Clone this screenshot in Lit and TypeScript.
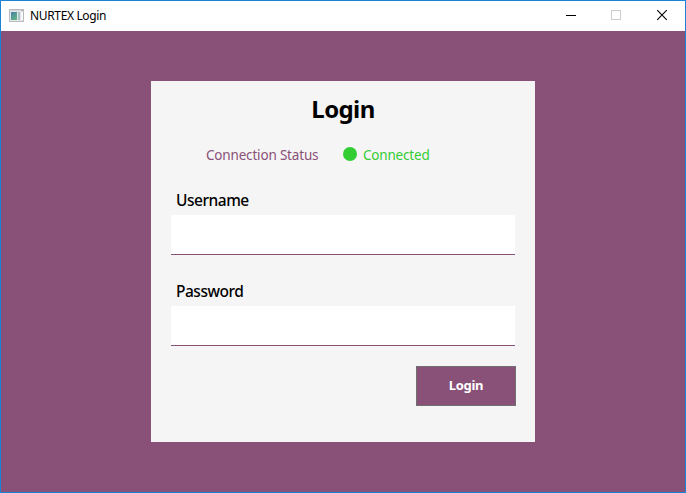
import { LitElement, html, css } from "lit";
import { customElement, property } from "lit/decorators.js";

@customElement("title-bar")
class TitleBar extends LitElement {
  static styles = css`
    :host { display: flex; height: 30px; background: #fff; align-items: center; }
    .app { width: 16px; height: 13px; margin: 0 5px 1px 8px; }
    .name { flex: 1; font-size: 12px; line-height: 16px; letter-spacing: -0.35px; white-space: nowrap; }
    .control { width: 46px; height: 30px; display: flex; }
    svg { display: block; }
  `;
  render() {
    return html`
      <svg class="app" viewBox="0 0 16 13">
        <defs>
          <linearGradient id="pane" x1="0" y1="0" x2="0.6" y2="1">
            <stop offset="0" stop-color="#4a7fa8" />
            <stop offset="1" stop-color="#5cb386" />
          </linearGradient>
        </defs>
        <rect x="0.5" y="0.5" width="14" height="12" fill="#e4e6e9" stroke="#b9bcc1" />
        <rect x="1" y="1" width="10" height="1" fill="#d2d5da" />
        <rect x="2" y="3" width="6" height="8" fill="url(#pane)" />
        <rect x="9" y="3" width="2" height="8" fill="#a9c2c4" />
        <rect x="12" y="3" width="2" height="8" fill="#f8f8f8" />
        <rect x="12" y="1" width="2" height="1" fill="#b9a5a5" />
      </svg>
      <span class="name">NURTEX Login</span>
      <span class="control"><svg width="46" height="30"><path d="M19 14.5h10" stroke="#000" /></svg></span>
      <span class="control"><svg width="46" height="30"><rect x="18.5" y="9.5" width="9" height="9" fill="none" stroke="#ccc" /></svg></span>
      <span class="control"><svg width="46" height="30"><path d="M18.2 9.2l9.6 9.6M27.8 9.2l-9.6 9.6" stroke="#000" stroke-width="1.1" /></svg></span>
    `;
  }
}

@customElement("login-field")
class LoginField extends LitElement {
  @property() label = "";
  @property() type = "text";
  static styles = css`
    :host { display: block; }
    label { display: block; box-sizing: border-box; height: 29px; line-height: 29px; padding-left: 5px; font-size: 15.5px; font-weight: 540; letter-spacing: -0.48px; }
    input { display: block; box-sizing: border-box; width: 344px; height: 40px; border: 0; border-bottom: 1px solid #895178; border-radius: 0; background: #fff; padding: 0 5px; outline: 0; }
  `;
  render() {
    return html`<label for="f">${this.label}</label><input id="f" type=${this.type} />`;
  }
}

@customElement("app-root")
class AppRoot extends LitElement {
  static styles = css`
    :host { display: flex; flex-direction: column; box-sizing: border-box; width: 686px; height: 493px; border: 1px solid #1883d7; background: #895178; font-family: "Noto Sans", "Open Sans", sans-serif; color: #000; overflow: hidden; }
    .card { box-sizing: border-box; width: 384px; height: 361px; margin: 50px 0 0 150px; padding: 0 20px; background: #f5f5f5; }
    h1 { margin: 0; padding-top: 11px; height: 35px; line-height: 34px; font-size: 24px; font-weight: 680; text-align: center; letter-spacing: -0.6px; }
    .status { display: flex; align-items: center; height: 20px; margin-top: 18px; padding-left: 35px; font-size: 13.5px; color: #895178; letter-spacing: -0.18px; }
    .dot { width: 14px; height: 14px; border-radius: 50%; background: #32cd32; margin: -1.5px 5.5px 0 25.4px; }
    .connected { color: #32cd32; }
    .label { width: 112px; white-space: nowrap; }
    .first { margin-top: 21px; }
    .second { margin-top: 22px; }
    button { display: block; box-sizing: border-box; width: 100px; height: 40px; margin: 20px 0 0 245px; border: 1px solid #707070; background: #895178; color: #fff; font: 700 13px "Noto Sans", sans-serif; letter-spacing: -0.3px; padding: 0 0 2px; }
  `;
  render() {
    return html`
      <title-bar></title-bar>
      <main class="card">
        <h1>Login</h1>
        <div class="status">
          <span class="label">Connection Status</span>
          <span class="dot"></span>
          <span class="connected">Connected</span>
        </div>
        <login-field class="first" label="Username"></login-field>
        <login-field class="second" label="Password" type="password"></login-field>
        <button>Login</button>
      </main>
    `;
  }
}
